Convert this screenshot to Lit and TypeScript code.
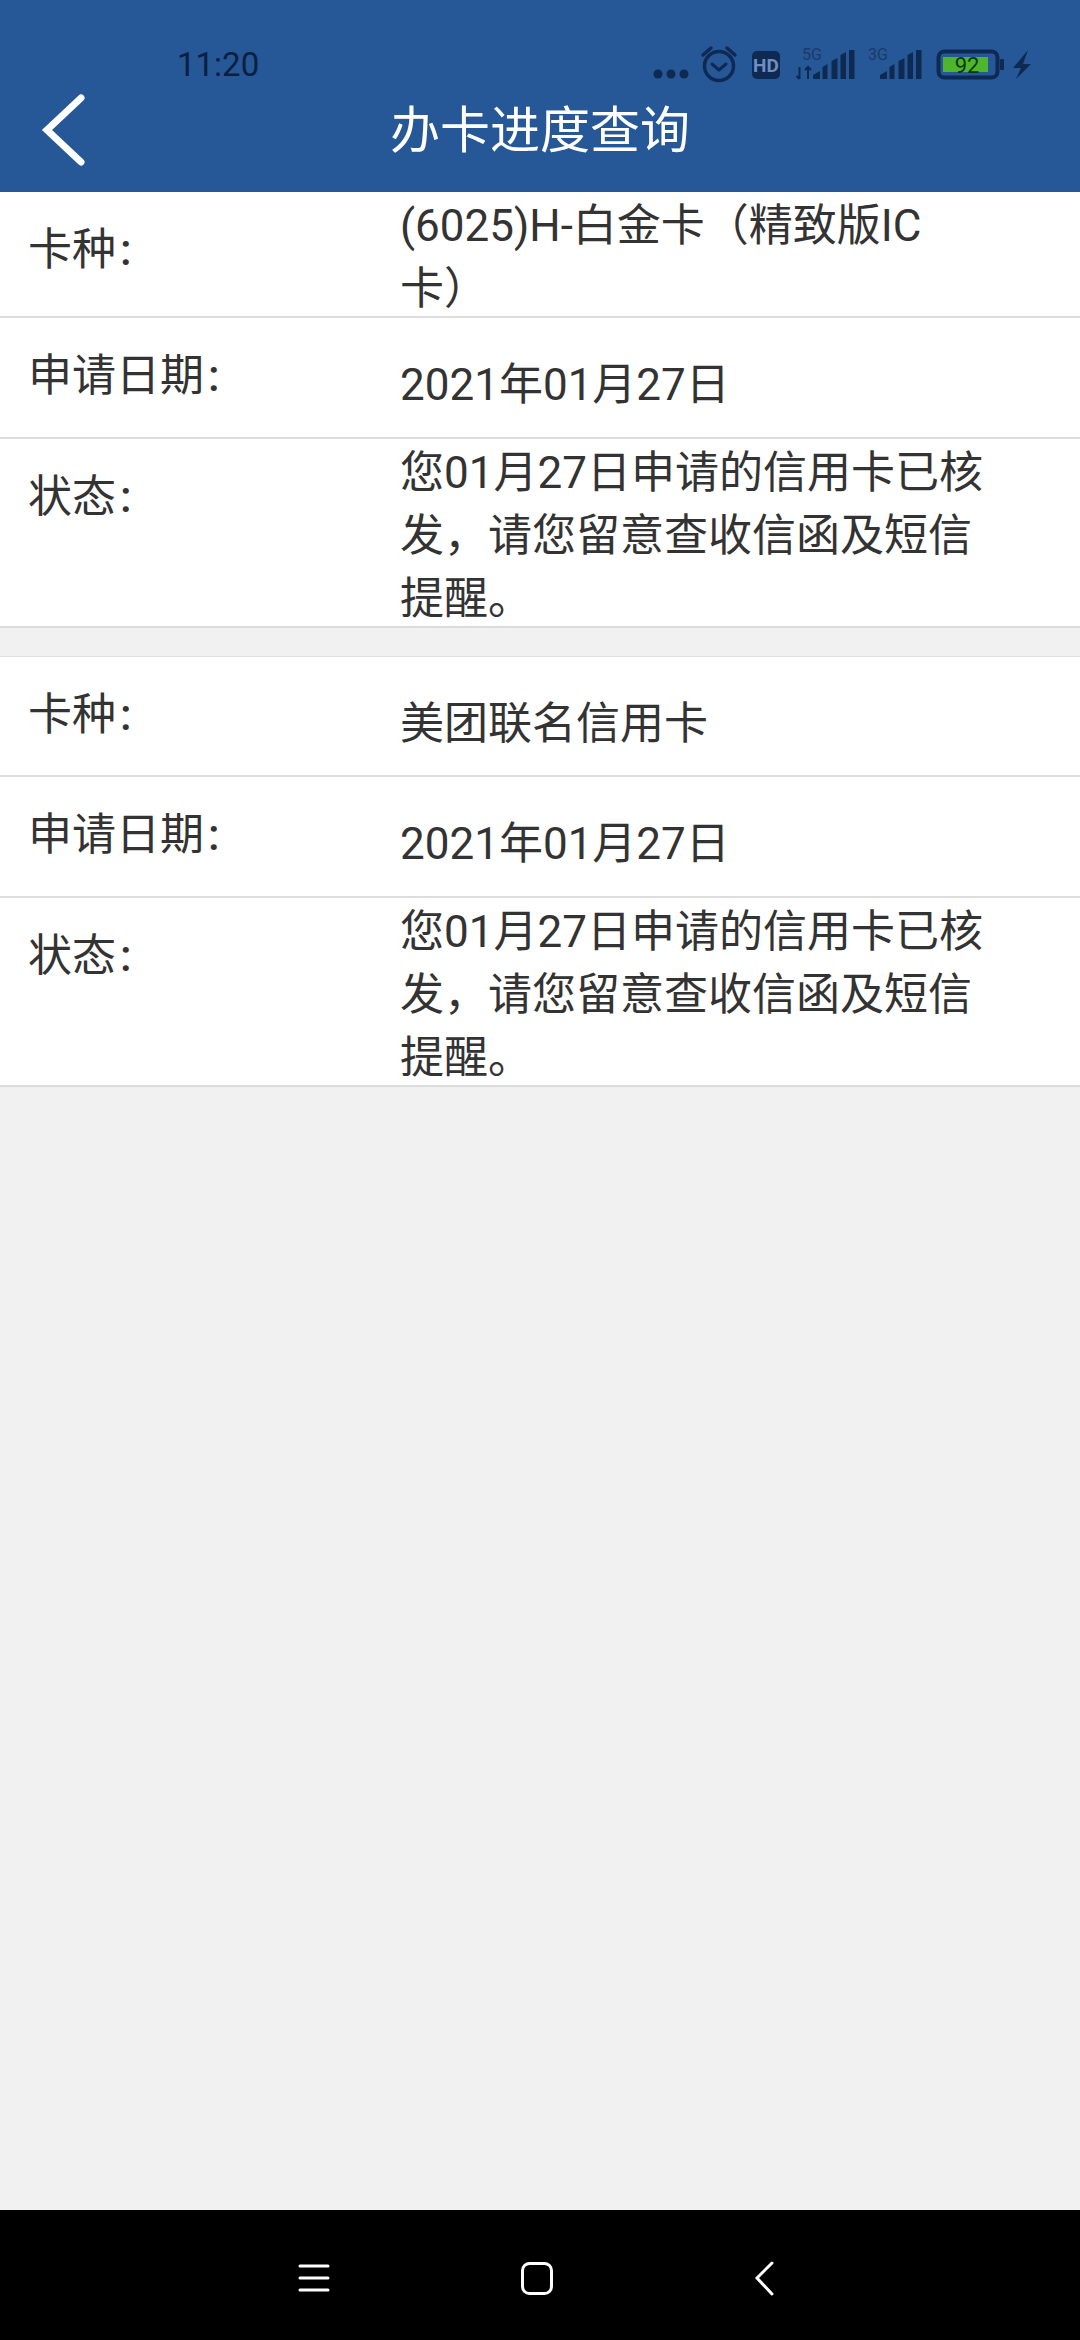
import { LitElement, html, css, svg } from 'lit';
import { customElement } from 'lit/decorators.js';

const records = [
  [
    { label: '卡种', value: '(6025)H-白金卡（精致版IC卡）', single: false },
    { label: '申请日期', value: '2021年01月27日', single: true },
    { label: '状态', value: '您01月27日申请的信用卡已核发，请您留意查收信函及短信提醒。', single: false },
  ],
  [
    { label: '卡种', value: '美团联名信用卡', single: true },
    { label: '申请日期', value: '2021年01月27日', single: true },
    { label: '状态', value: '您01月27日申请的信用卡已核发，请您留意查收信函及短信提醒。', single: false },
  ],
];

const ink = '#0f2a52';

// signal strength bars, 41 wide and 29 high
const bars = () => svg`
  <path d="M0 29v-4l7-4v8zM9.500 29v-12l5-3v15zM18.500 29v-18l6-3v21zM27.500 29v-24l5.500-3v27zM36 29v-29h5.500v29z" fill="${ink}"/>`;

@customElement('app-root')
export class AppRoot extends LitElement {
  static styles = css`
    :host {
      display: flex;
      flex-direction: column;
      width: 1080px;
      height: 2340px;
      font-family: Roboto, 'Noto Sans CJK SC', sans-serif;
      background: #f1f1f1;
    }
    .header {
      height: 192px;
      background: #265797;
      flex: none;
    }
    .status {
      height: 90px;
      display: flex;
      align-items: flex-start;
      padding: 44px 0 0 177px;
      box-sizing: border-box;
      position: relative;
    }
    .time {
      font-size: 33px;
      line-height: 42px;
      color: #0b2040;
    }
    .icons {
      position: absolute;
      left: 650px;
      top: 44px;
    }
    .title-row {
      display: flex;
      align-items: center;
      height: 80px;
      position: relative;
    }
    .back {
      position: absolute;
      left: 40px;
      top: 3px;
    }
    .title {
      flex: 1;
      text-align: center;
      font-size: 50px;
      line-height: 80px;
      color: #fff;
      margin-top: 1px;
    }
    .content {
      flex: 1;
    }
    .group {
      background: #fff;
      margin-bottom: 28px;
    }
    .group + .group {
      border-top: 1px solid #e0e0e0;
    }
    .row {
      display: flex;
      border-bottom: 2px solid #dcdcdc;
      min-height: 118.5px;
      font-size: 44px;
      color: #333;
    }
    .label {
      flex: none;
      width: 400px;
      box-sizing: border-box;
      padding-left: 28px;
      line-height: 116px;
    }
    .colon {
      margin-left: 4px;
      font-weight: 500;
    }
    .value {
      width: 584px;
      line-height: 63px;
      padding-top: 3px;
      margin-bottom: -5px;
    }
    .value.single {
      padding-top: 36px;
    }
    .navbar {
      flex: none;
      height: 130px;
      background: #000;
      display: flex;
      justify-content: center;
    }
  `;

  render() {
    return html`
      <div class="header">
        <div class="status">
          <span class="time">11:20</span>
          <svg class="icons" width="390" height="44" viewBox="650 44 390 44" fill="none">
            <circle cx="658" cy="74" r="4.5" fill="${ink}"/>
            <circle cx="671" cy="74" r="4.5" fill="${ink}"/>
            <circle cx="684" cy="74" r="4.5" fill="${ink}"/>
            <circle cx="719" cy="66" r="14.5" stroke="${ink}" stroke-width="3.5"/>
            <path d="M712 64l7 6 7-6" stroke="${ink}" stroke-width="3" stroke-linecap="round" stroke-linejoin="round"/>
            <path d="M703 55l8-7M735 55l-8-7" stroke="${ink}" stroke-width="3.5" stroke-linecap="round"/>
            <rect x="752" y="51" width="28" height="28" rx="5" fill="${ink}"/>
            <text x="766" y="72" text-anchor="middle" font-size="19" font-weight="700" font-family="Roboto, sans-serif" fill="#6f8fc0">HD</text>
            <text x="802" y="60" font-size="16" font-family="Roboto, sans-serif" fill="#1b3a6b">5G</text>
            <path d="M799.500 67v12M796.500 76l3 3M808 79v-12M805 70l3-3 3 3" stroke="${ink}" stroke-width="2"/>
            <g transform="translate(813 50)">${bars()}</g>
            <text x="868" y="60" font-size="16" font-family="Roboto, sans-serif" fill="#1b3a6b">3G</text>
            <g transform="translate(880 50)">${bars()}</g>
            <rect x="938.500" y="51.500" width="59" height="26" rx="6" stroke="${ink}" stroke-width="4"/>
            <rect x="943" y="57" width="45" height="15" fill="#4fb52a"/>
            <rect x="1000" y="59" width="4" height="11" rx="1" fill="${ink}"/>
            <text x="967" y="73" text-anchor="middle" font-size="22" font-family="Roboto, sans-serif" fill="#0c3a10">92</text>
            <path d="M1028 50L1013 68h8l-5 11 15-15h-8z" fill="${ink}"/>
          </svg>
        </div>
        <div class="title-row">
          <svg class="back" width="50" height="74" viewBox="0 0 50 74" fill="none">
            <path d="M41 5L7 37l34 32" stroke="#fff" stroke-width="7" stroke-linecap="round" stroke-linejoin="miter"/>
          </svg>
          <div class="title">办卡进度查询</div>
        </div>
      </div>
      <div class="content">
        ${records.map(
          (rows) => html`
            <div class="group">
              ${rows.map(
                (r) => html`
                  <div class="row">
                    <div class="label">${r.label}<span class="colon">:</span></div>
                    <div class="value ${r.single ? 'single' : ''}">${r.value}</div>
                  </div>
                `
              )}
            </div>
          `
        )}
      </div>
      <div class="navbar">
        <svg width="1080" height="130" viewBox="0 2210 1080 130" fill="none">
          <path d="M300 2266h28M300 2278h28M300 2290h28" stroke="#fff" stroke-width="3" stroke-linecap="round"/>
          <rect x="522.500" y="2263.500" width="29" height="30" rx="7" stroke="#fff" stroke-width="3"/>
          <path d="M772 2263l-15 15 15 16" stroke="#fff" stroke-width="3" stroke-linecap="round"/>
        </svg>
      </div>
    `;
  }
}
